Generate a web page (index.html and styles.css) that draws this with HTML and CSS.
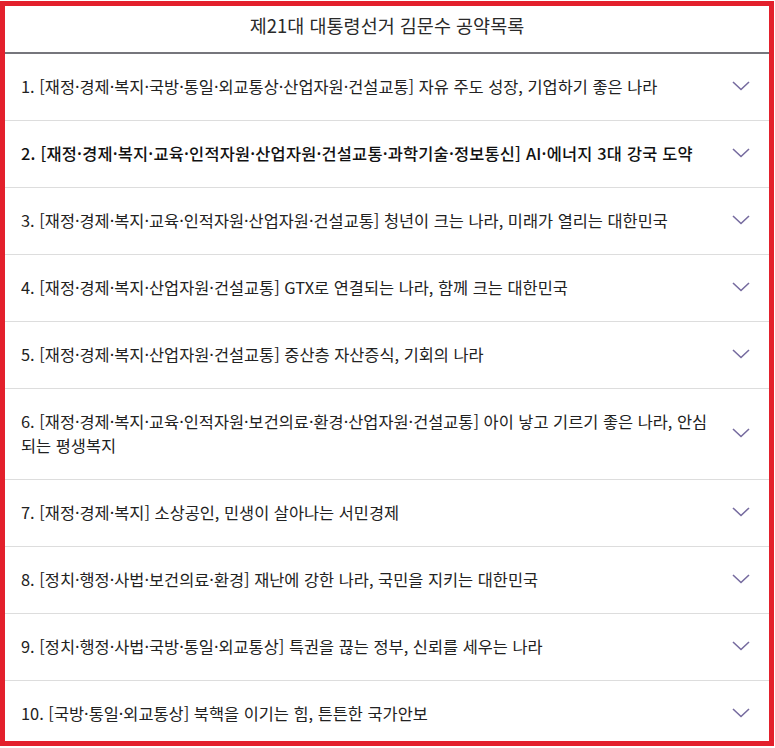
FILE: index.html
```html
<!DOCTYPE html>
<html lang="ko">
<head>
<meta charset="utf-8">
<title>제21대 대통령선거 김문수 공약목록</title>
<link rel="stylesheet" href="styles.css">
</head>
<body>
<div class="frame">
  <div class="header">제21대 대통령선거 김문수 공약목록</div>
  <ul class="list">
    <li class="row"><span class="label">1. [재정·경제·복지·국방·통일·외교통상·산업자원·건설교통] 자유 주도 성장, 기업하기 좋은 나라</span><svg class="chev" viewBox="0 0 18 10"><path d="M1 1 L9 8.5 L17 1"/></svg></li>
    <li class="row row-strong"><span class="label">2. [재정·경제·복지·교육·인적자원·산업자원·건설교통·과학기술·정보통신] AI·에너지 3대 강국 도약</span><svg class="chev" viewBox="0 0 18 10"><path d="M1 1 L9 8.5 L17 1"/></svg></li>
    <li class="row"><span class="label">3. [재정·경제·복지·교육·인적자원·산업자원·건설교통] 청년이 크는 나라, 미래가 열리는 대한민국</span><svg class="chev" viewBox="0 0 18 10"><path d="M1 1 L9 8.5 L17 1"/></svg></li>
    <li class="row"><span class="label">4. [재정·경제·복지·산업자원·건설교통] GTX로 연결되는 나라, 함께 크는 대한민국</span><svg class="chev" viewBox="0 0 18 10"><path d="M1 1 L9 8.5 L17 1"/></svg></li>
    <li class="row"><span class="label">5. [재정·경제·복지·산업자원·건설교통] 중산층 자산증식, 기회의 나라</span><svg class="chev" viewBox="0 0 18 10"><path d="M1 1 L9 8.5 L17 1"/></svg></li>
    <li class="row"><span class="label">6. [재정·경제·복지·교육·인적자원·보건의료·환경·산업자원·건설교통] 아이 낳고 기르기 좋은 나라, 안심되는 평생복지</span><svg class="chev" viewBox="0 0 18 10"><path d="M1 1 L9 8.5 L17 1"/></svg></li>
    <li class="row"><span class="label">7. [재정·경제·복지] 소상공인, 민생이 살아나는 서민경제</span><svg class="chev" viewBox="0 0 18 10"><path d="M1 1 L9 8.5 L17 1"/></svg></li>
    <li class="row"><span class="label">8. [정치·행정·사법·보건의료·환경] 재난에 강한 나라, 국민을 지키는 대한민국</span><svg class="chev" viewBox="0 0 18 10"><path d="M1 1 L9 8.5 L17 1"/></svg></li>
    <li class="row"><span class="label">9. [정치·행정·사법·국방·통일·외교통상] 특권을 끊는 정부, 신뢰를 세우는 나라</span><svg class="chev" viewBox="0 0 18 10"><path d="M1 1 L9 8.5 L17 1"/></svg></li>
    <li class="row"><span class="label">10. [국방·통일·외교통상] 북핵을 이기는 힘, 튼튼한 국가안보</span><svg class="chev" viewBox="0 0 18 10"><path d="M1 1 L9 8.5 L17 1"/></svg></li>
  </ul>
</div>
</body>
</html>
```
FILE: styles.css
```css
html, body {
  margin: 0;
  padding: 0;
  background: #ffffff;
}
body {
  font-family: "Noto Sans CJK KR", "Noto Sans", sans-serif;
  color: #222222;
}
.frame {
  box-sizing: border-box;
  width: 774px;
  height: 745px;
  margin-top: 1px;
  border: 5px solid #e3202c;
  overflow: hidden;
  background: #ffffff;
}
.header {
  height: 48px;
  box-sizing: border-box;
  padding-top: 6px;
  line-height: 26px;
  font-size: 18.5px;
  text-align: center;
  color: #2a2a2a;
  border-bottom: 2px solid #76767c;
}
.list {
  list-style: none;
  margin: 0;
  padding: 0;
}
.row {
  display: flex;
  align-items: center;
  justify-content: space-between;
  gap: 24px;
  padding: 20px 19px 22px 16px;
  border-bottom: 1px solid #dddddd;
}
.label {
  font-size: 16.4px;
  line-height: 24px;
  color: #222222;
}
.row-strong .label {
  color: #111111;
  font-weight: 500;
  letter-spacing: 0.2px;
}
.chev {
  flex: none;
  width: 18px;
  height: 10px;
}
.chev path {
  fill: none;
  stroke: #766b9f;
  stroke-width: 1.6;
}
```
